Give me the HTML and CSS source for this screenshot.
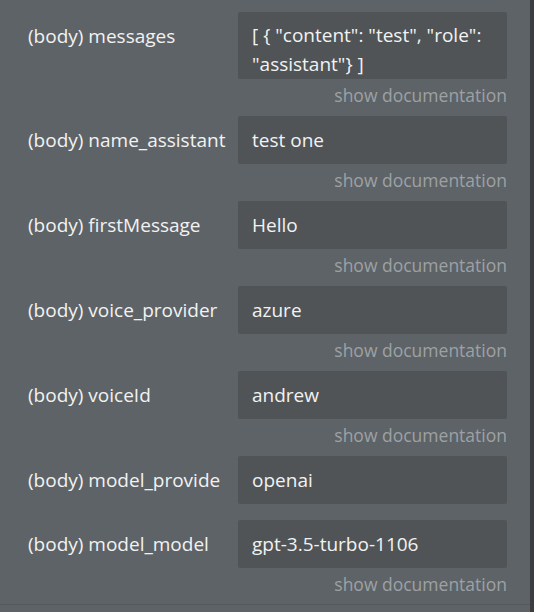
FILE: index.html
```html
<!DOCTYPE html>
<html>
<head>
<meta charset="utf-8">
<link rel="stylesheet" href="styles.css">
</head>
<body>
<div class="page">
  <div class="panel">
    <div class="row">
      <div class="label">(body) messages</div>
      <div class="col">
        <div class="box multi">[ { "content": "test", "role": "assistant"} ]</div>
        <div class="doc">show documentation</div>
      </div>
    </div>
    <div class="row">
      <div class="label">(body) name_assistant</div>
      <div class="col">
        <div class="box">test one</div>
        <div class="doc">show documentation</div>
      </div>
    </div>
    <div class="row">
      <div class="label">(body) firstMessage</div>
      <div class="col">
        <div class="box">Hello</div>
        <div class="doc">show documentation</div>
      </div>
    </div>
    <div class="row">
      <div class="label">(body) voice_provider</div>
      <div class="col">
        <div class="box">azure</div>
        <div class="doc">show documentation</div>
      </div>
    </div>
    <div class="row">
      <div class="label">(body) voiceId</div>
      <div class="col">
        <div class="box">andrew</div>
        <div class="doc">show documentation</div>
      </div>
    </div>
    <div class="row">
      <div class="label">(body) model_provide</div>
      <div class="col">
        <div class="box">openai</div>
      </div>
    </div>
    <div class="row">
      <div class="label">(body) model_model</div>
      <div class="col">
        <div class="box">gpt-3.5-turbo-1106</div>
        <div class="doc">show documentation</div>
      </div>
    </div>
  </div>
  <div class="bar"></div>
</div>
</body>
</html>
```
FILE: styles.css
```css
html, body {
  margin: 0;
  padding: 0;
  background: #5e6367;
}
body {
  font-family: "Open Sans", "Noto Sans", sans-serif;
  color: #f2f2f2;
}
.page {
  display: flex;
  width: 534px;
  height: 612px;
  overflow: hidden;
}
.panel {
  flex: 1;
  padding: 12px 23px 0 28px;
  height: 592px;
  border-bottom: 1px solid #55595d;
}
.bar {
  width: 4px;
  background: #3b3d3f;
}
.row {
  display: flex;
  margin-bottom: 16px;
}
.label {
  width: 210px;
  font-size: 19px;
  line-height: 48px;
  white-space: nowrap;
}
.col {
  width: 269px;
}
.box {
  background: #505457;
  border-radius: 2px;
  font-size: 19px;
  line-height: 48px;
  height: 48px;
  padding: 0 14px;
  box-sizing: border-box;
  white-space: nowrap;
}
.box.multi {
  height: 67px;
  line-height: 29px;
  padding: 9px 14px 0;
  white-space: normal;
}
.doc {
  text-align: right;
  font-size: 17.5px;
  line-height: 20px;
  color: #9da1a4;
  margin: 6px 0 -5px;
}
```
